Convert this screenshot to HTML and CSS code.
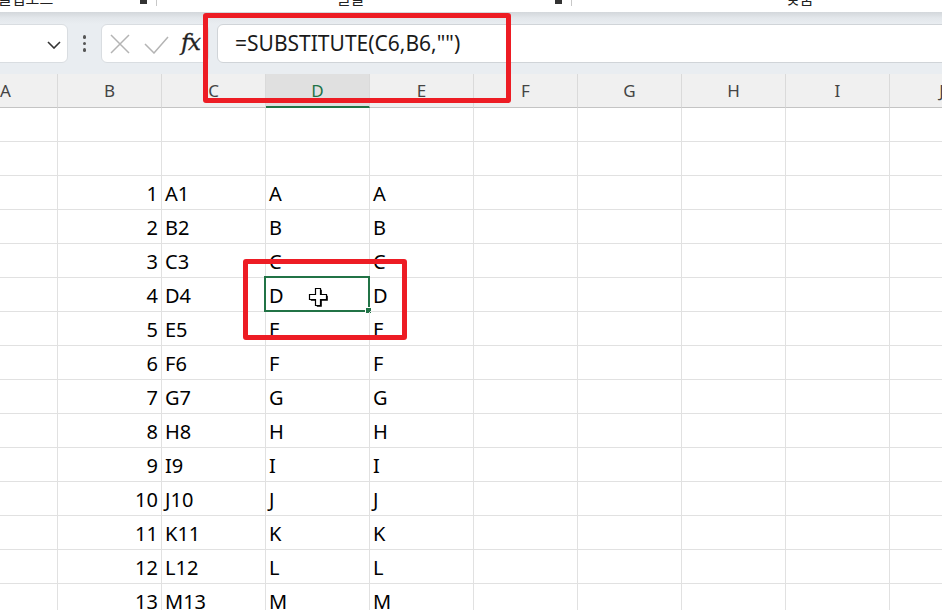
FILE: index.html
```html
<!DOCTYPE html>
<html lang="ko">
<head>
<meta charset="utf-8">
<title>Excel SUBSTITUTE</title>
<link rel="stylesheet" href="styles.css">
</head>
<body>
<div class="ribbon">
  <span class="rb-label rb-clip">클립보드</span>
  <span class="rb-launch"></span>
  <span class="rb-sep"></span>
  <span class="rb-label rb-font">글꼴</span>
  <span class="rb-launch rb-launch2"></span>
  <span class="rb-sep"></span>
  <span class="rb-label rb-align">맞춤</span>
</div>

<div class="fbar">
  <div class="namebox">
    <svg class="chev" width="14" height="8" viewBox="0 0 14 8"><path d="M1 1 L7 7 L13 1" fill="none" stroke="#333" stroke-width="1.6"/></svg>
  </div>
  <div class="dots"><i></i><i></i><i></i></div>
  <div class="fbtns">
    <svg width="20" height="20" viewBox="0 0 20 20"><path d="M1 1 L19 19 M19 1 L1 19" stroke="#b4b4b4" stroke-width="1.5" fill="none"/></svg>
    <svg class="chk" width="25" height="18" viewBox="0 0 25 18"><path d="M1 8 L10 17 L24 1" stroke="#b4b4b4" stroke-width="1.5" fill="none"/></svg>
    <span class="fx">fx</span>
  </div>
  <div class="finput">=SUBSTITUTE(C6,B6,"")</div>
</div>

<div class="sheet">
  <div class="row hdr">
    <div class="c">A</div><div class="c">B</div><div class="c">C</div><div class="c sel">D</div><div class="c">E</div><div class="c">F</div><div class="c">G</div><div class="c">H</div><div class="c">I</div><div class="c">J</div>
  </div>
  <div class="row"><div class="c"></div><div class="c"></div><div class="c"></div><div class="c"></div><div class="c"></div><div class="c"></div><div class="c"></div><div class="c"></div><div class="c"></div><div class="c"></div></div>
  <div class="row"><div class="c"></div><div class="c"></div><div class="c"></div><div class="c"></div><div class="c"></div><div class="c"></div><div class="c"></div><div class="c"></div><div class="c"></div><div class="c"></div></div>
  <div class="row"><div class="c"></div><div class="c num">1</div><div class="c">A1</div><div class="c">A</div><div class="c">A</div><div class="c"></div><div class="c"></div><div class="c"></div><div class="c"></div><div class="c"></div></div>
  <div class="row"><div class="c"></div><div class="c num">2</div><div class="c">B2</div><div class="c">B</div><div class="c">B</div><div class="c"></div><div class="c"></div><div class="c"></div><div class="c"></div><div class="c"></div></div>
  <div class="row"><div class="c"></div><div class="c num">3</div><div class="c">C3</div><div class="c">C</div><div class="c">C</div><div class="c"></div><div class="c"></div><div class="c"></div><div class="c"></div><div class="c"></div></div>
  <div class="row"><div class="c"></div><div class="c num">4</div><div class="c">D4</div><div class="c active">D<span class="selbox"><span class="handle"></span></span><svg class="cursor" width="22" height="24" viewBox="0 0 22 24"><path d="M8.5 2.5 H13.5 V8.5 H19.5 V13.5 H13.5 V19.5 H8.5 V13.5 H2.5 V8.5 H8.5 Z" fill="#000" transform="translate(1.3 1.3)"/><path d="M8.5 2.5 H13.5 V8.5 H19.5 V13.5 H13.5 V19.5 H8.5 V13.5 H2.5 V8.5 H8.5 Z" fill="#fff" stroke="#000" stroke-width="1.2"/></svg></div><div class="c">D</div><div class="c"></div><div class="c"></div><div class="c"></div><div class="c"></div><div class="c"></div></div>
  <div class="row"><div class="c"></div><div class="c num">5</div><div class="c">E5</div><div class="c">E</div><div class="c">E</div><div class="c"></div><div class="c"></div><div class="c"></div><div class="c"></div><div class="c"></div></div>
  <div class="row"><div class="c"></div><div class="c num">6</div><div class="c">F6</div><div class="c">F</div><div class="c">F</div><div class="c"></div><div class="c"></div><div class="c"></div><div class="c"></div><div class="c"></div></div>
  <div class="row"><div class="c"></div><div class="c num">7</div><div class="c">G7</div><div class="c">G</div><div class="c">G</div><div class="c"></div><div class="c"></div><div class="c"></div><div class="c"></div><div class="c"></div></div>
  <div class="row"><div class="c"></div><div class="c num">8</div><div class="c">H8</div><div class="c">H</div><div class="c">H</div><div class="c"></div><div class="c"></div><div class="c"></div><div class="c"></div><div class="c"></div></div>
  <div class="row"><div class="c"></div><div class="c num">9</div><div class="c">I9</div><div class="c">I</div><div class="c">I</div><div class="c"></div><div class="c"></div><div class="c"></div><div class="c"></div><div class="c"></div></div>
  <div class="row"><div class="c"></div><div class="c num">10</div><div class="c">J10</div><div class="c">J</div><div class="c">J</div><div class="c"></div><div class="c"></div><div class="c"></div><div class="c"></div><div class="c"></div></div>
  <div class="row"><div class="c"></div><div class="c num">11</div><div class="c">K11</div><div class="c">K</div><div class="c">K</div><div class="c"></div><div class="c"></div><div class="c"></div><div class="c"></div><div class="c"></div></div>
  <div class="row"><div class="c"></div><div class="c num">12</div><div class="c">L12</div><div class="c">L</div><div class="c">L</div><div class="c"></div><div class="c"></div><div class="c"></div><div class="c"></div><div class="c"></div></div>
  <div class="row"><div class="c"></div><div class="c num">13</div><div class="c">M13</div><div class="c">M</div><div class="c">M</div><div class="c"></div><div class="c"></div><div class="c"></div><div class="c"></div><div class="c"></div></div>
</div>

<div class="mark mark1"></div>
<div class="mark mark2"></div>
</body>
</html>
```

FILE: styles.css
```css
* { box-sizing: border-box; }
html, body {
  margin: 0;
  padding: 0;
  width: 942px;
  height: 610px;
  overflow: hidden;
  background: #fff;
  font-family: "Noto Sans", "Noto Sans CJK KR", sans-serif;
  color: #000;
}

/* ribbon remnant (group labels cut by the window top) */
.ribbon {
  height: 12px;
  background: #fff;
  overflow: hidden;
  display: flex;
  align-items: flex-start;
}
.rb-label {
  font-family: "Noto Sans CJK KR", sans-serif;
  font-size: 15px;
  line-height: 15px;
  margin-top: -10px;
  color: #222;
  white-space: nowrap;
}
.rb-clip { margin-left: -2px; width: 142px; }
.rb-launch {
  width: 7px;
  height: 4px;
  background: #333;
}
.rb-sep {
  width: 1px;
  height: 6px;
  background: #c8c8c8;
  margin-left: 9px;
}
.rb-font { margin-left: 180px; width: 218px; }
.rb-align { margin-left: 214px; }

/* formula bar */
.fbar {
  height: 62px;
  background: linear-gradient(#d3d7db 0, #e3e7eb 6px, #e9edf1 12px);
  padding-top: 12px;
  display: flex;
  align-items: flex-start;
}
.namebox {
  width: 78px;
  height: 39px;
  margin-left: -10px;
  background: #fff;
  border: 1px solid #d9dde1;
  border-radius: 6px;
  display: flex;
  align-items: center;
  justify-content: flex-end;
  padding-right: 6px;
}
.chev { display: block; margin-top: 2px; }
.dots {
  width: 33px;
  height: 39px;
  display: flex;
  flex-direction: column;
  align-items: center;
  justify-content: center;
  gap: 3px;
}
.dots i {
  display: block;
  width: 3.5px;
  height: 3.5px;
  border-radius: 50%;
  background: #555;
}
.fbtns {
  width: 108px;
  height: 39px;
  background: #fff;
  border: 1px solid #d9dde1;
  border-radius: 6px;
  display: flex;
  align-items: center;
  padding-left: 8px;
}
.fbtns svg { display: block; }
.fbtns .chk { margin-left: 14px; margin-top: 2px; }
.fx {
  font-family: "DejaVu Serif", "Liberation Serif", serif;
  font-style: italic;
  font-size: 23px;
  line-height: 23px;
  color: #222;
  margin-left: 12px;
  margin-top: -2px;
  letter-spacing: -1.5px;
  -webkit-text-stroke: 0.3px #222;
}
.finput {
  flex: 1;
  height: 39px;
  margin-left: 8px;
  margin-right: -8px;
  background: #fff;
  border: 1px solid #d0d4d8;
  border-radius: 6px;
  font-size: 21px;
  line-height: 37px;
  padding-left: 17px;
  color: #1a1a1a;
  white-space: nowrap;
}

/* sheet */
.sheet {
  margin-left: -46px;
  width: 1040px;
}
.row {
  display: flex;
  height: 34px;
}
.c {
  width: 104px;
  flex: none;
  height: 34px;
  border-right: 1px solid #e1e1e1;
  border-bottom: 1px solid #e1e1e1;
  font-size: 20px;
  line-height: 20px;
  padding: 0 3px 5px 3px;
  display: flex;
  align-items: flex-end;
  position: relative;
  white-space: nowrap;
}
.c.num { justify-content: flex-end; padding-right: 3px; }

.hdr .c {
  background: #f0f0f0;
  border-right: 1px solid #dadada;
  border-bottom: 1px solid #c4c4c4;
  color: #444;
  font-size: 17px;
  line-height: 17px;
  justify-content: center;
  align-items: center;
  padding: 0;
}
.hdr .c.sel {
  background: #e0e0e0;
  color: #217346;
  border-bottom: 2px solid #217346;
  padding-top: 1px;
}

.selbox {
  position: absolute;
  left: -2px;
  top: -2px;
  right: -1px;
  bottom: -1px;
  border: 2px solid #217346;
}
.handle {
  position: absolute;
  right: -4px;
  bottom: -4px;
  width: 7px;
  height: 7px;
  background: #217346;
  border: 1px solid #fff;
}
.cursor {
  position: absolute;
  left: 41px;
  top: 8px;
}

/* red annotation boxes */
.mark {
  position: absolute;
  border: 5px solid #ed1c24;
  border-radius: 3px;
}
.mark1 { left: 203px; top: 13px; width: 308px; height: 90px; }
.mark2 { left: 243px; top: 259px; width: 164px; height: 81px; }
```
